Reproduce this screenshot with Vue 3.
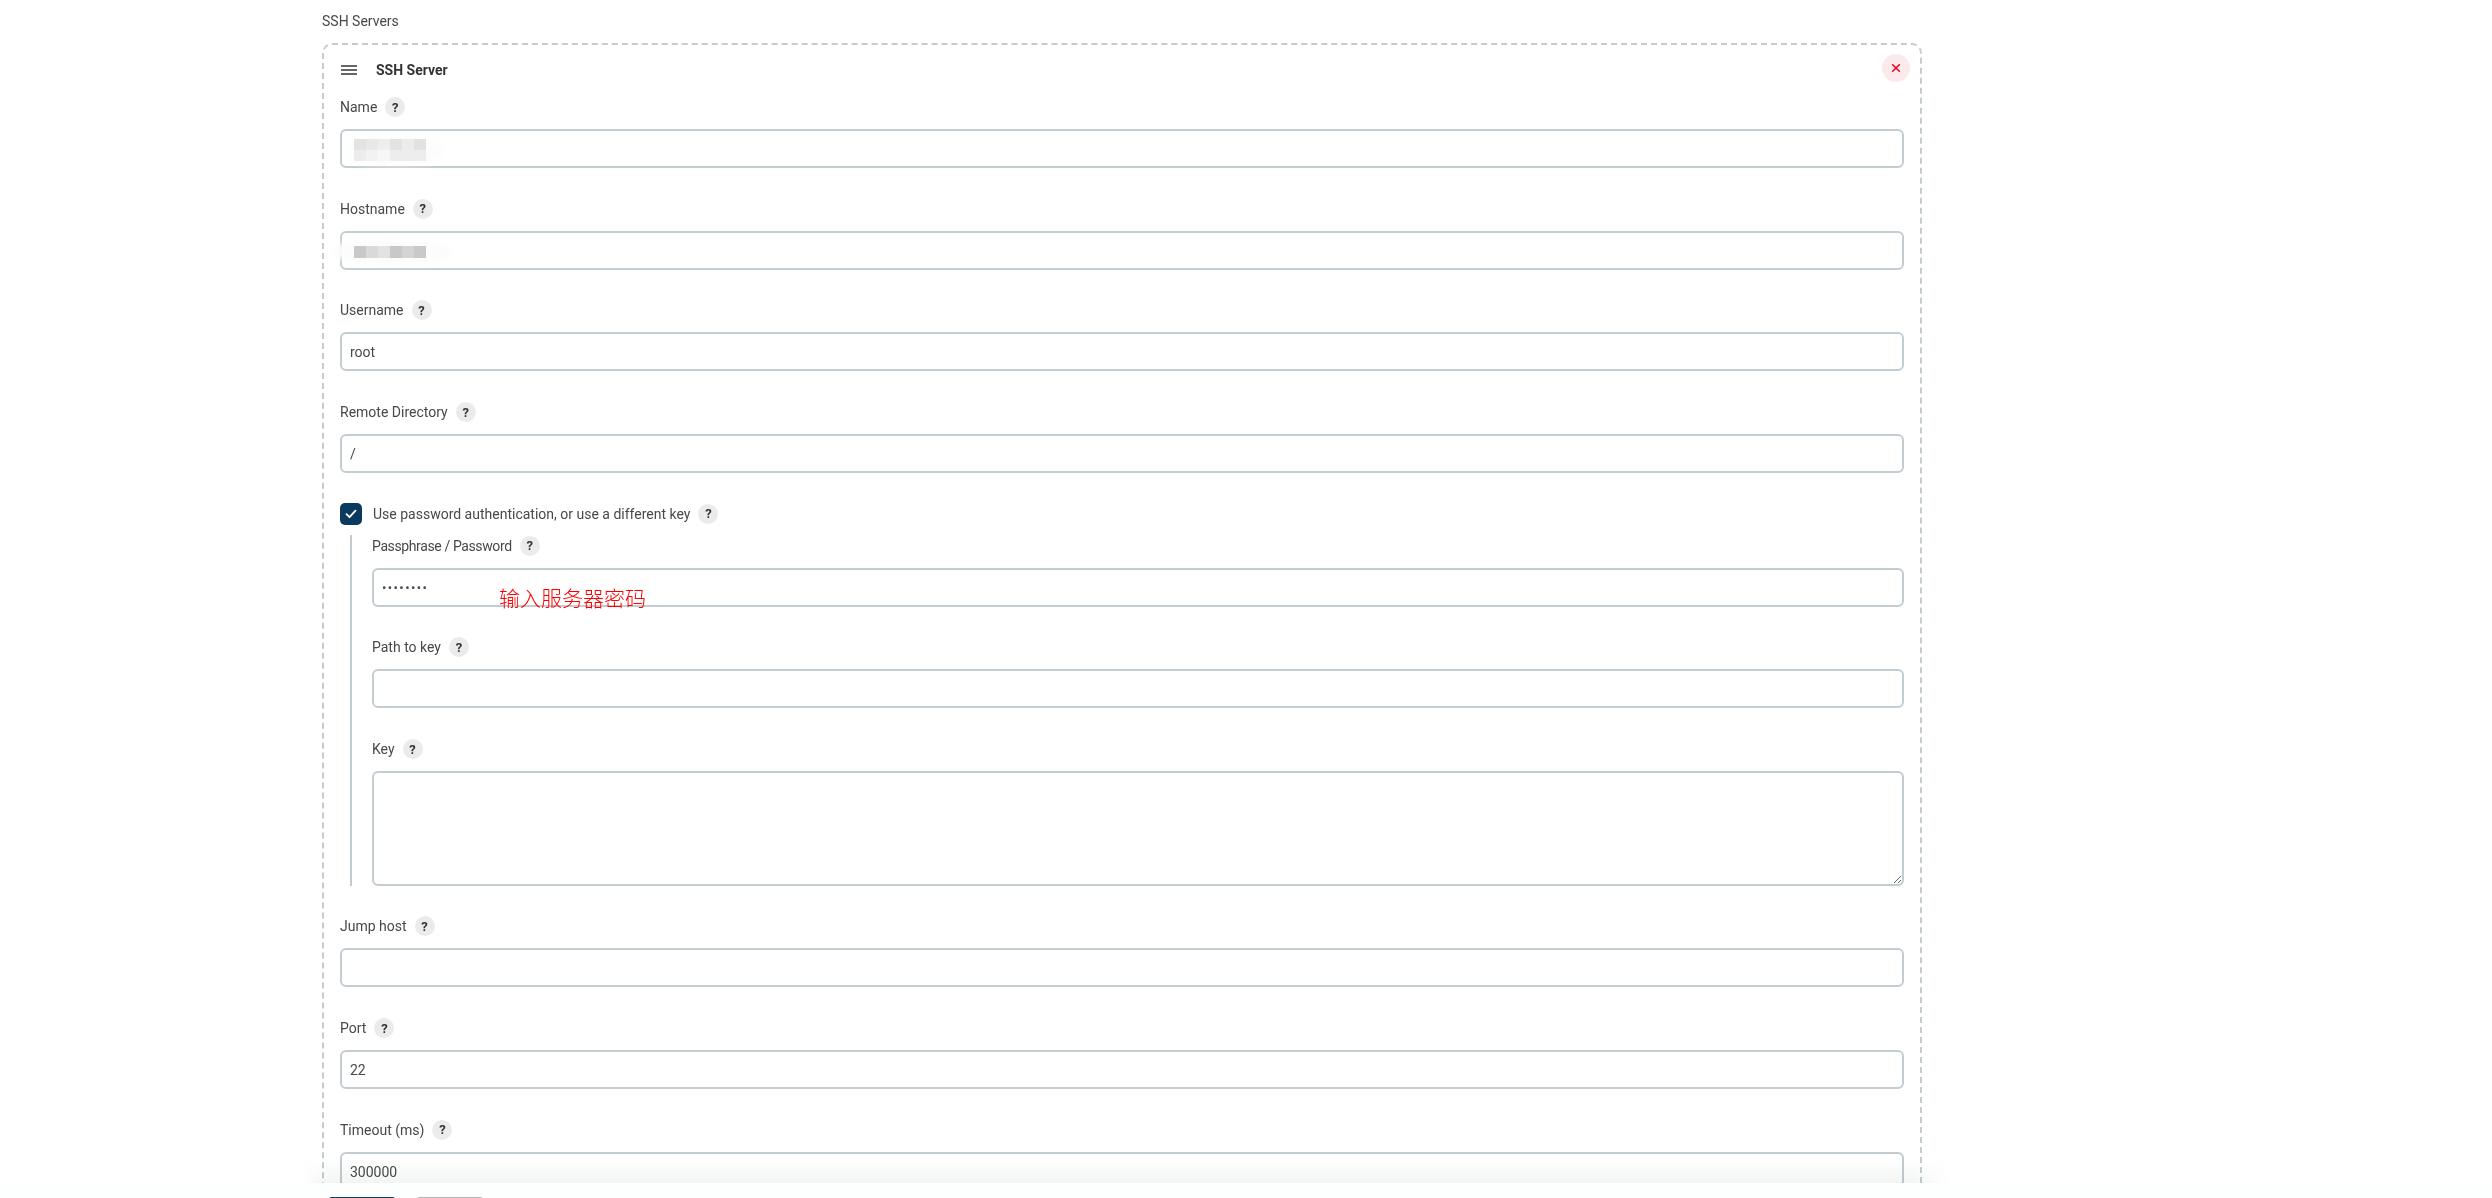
<template>
  <div class="page">
    <div class="section-title">SSH Servers</div>
    <div class="card">
      <div class="card-head">
        <svg class="drag" width="16" height="10" viewBox="0 0 16 10" aria-hidden="true">
          <path d="M0 1h16M0 5h16M0 9h16" stroke="#333" stroke-width="1.3" fill="none" />
        </svg>
        <span class="card-title">SSH Server</span>
        <button class="close" type="button" aria-label="Delete">
          <svg width="10" height="10" viewBox="0 0 10 10" aria-hidden="true">
            <path d="M1.2 1.2l7.6 7.6M8.8 1.2l-7.6 7.6" stroke="#e6001f" stroke-width="1.5" fill="none" />
          </svg>
        </button>
      </div>

      <div v-for="f in topFields" :key="f.label" class="field">
        <div class="label"><span>{{ f.label }}</span><i class="help">?</i></div>
        <div class="input-wrap">
          <input class="input" :value="f.value" readonly />
          <div v-if="f.blur" class="smudge" :class="'smudge--' + f.blur">
            <span
              v-for="(c, i) in blurCells[f.blur]"
              :key="i"
              class="cell"
              :style="{ background: c }"
            ></span>
          </div>
        </div>
      </div>

      <div class="check-row">
        <span class="checkbox">
          <svg width="12" height="10" viewBox="0 0 12 10" aria-hidden="true">
            <path d="M1.5 5.2l3 3 6-6.6" stroke="#fff" stroke-width="1.8" fill="none" stroke-linecap="round" stroke-linejoin="round" />
          </svg>
        </span>
        <span class="check-label">Use password authentication, or use a different key</span>
        <i class="help">?</i>
      </div>

      <div class="nested">
        <div class="field">
          <div class="label"><span class="tight">Passphrase / Password</span><i class="help">?</i></div>
          <div class="input-wrap">
            <input class="input input--pw" type="password" value="12345678" readonly />
            <span class="note">输入服务器密码</span>
          </div>
        </div>
        <div class="field">
          <div class="label"><span>Path to key</span><i class="help">?</i></div>
          <input class="input" readonly />
        </div>
        <div class="field field--last">
          <div class="label"><span>Key</span><i class="help">?</i></div>
          <textarea class="input textarea" readonly></textarea>
        </div>
      </div>

      <div v-for="f in bottomFields" :key="f.label" class="field">
        <div class="label"><span>{{ f.label }}</span><i class="help">?</i></div>
        <input class="input" :value="f.value" readonly />
      </div>
    </div>

    <div class="app-bar">
      <div class="bar-btn bar-btn--save"></div>
      <div class="bar-btn bar-btn--apply"></div>
    </div>
  </div>
</template>

<script setup>
const blurCells = {
  name: [
    "#e3e3e3", "#e8e8e8", "#eeeeee", "#e3e3e3", "#ececec", "#e2e2e2",
    "#ececec", "#f2f2f2", "#f7f7f7", "#ededed", "#ededed", "#ededed",
  ],
  host: ["#c9c9c9", "#d9d9d9", "#e2e2e2", "#c8c8c8", "#d4d4d4", "#c9c9c9"],
};

const topFields = [
  { label: "Name", value: "", blur: "name" },
  { label: "Hostname", value: "", blur: "host" },
  { label: "Username", value: "root" },
  { label: "Remote Directory", value: "/" },
];

const bottomFields = [
  { label: "Jump host", value: "" },
  { label: "Port", value: "22" },
  { label: "Timeout (ms)", value: "300000" },
];
</script>

<style>
html,
body {
  margin: 0;
  background: #fff;
  overflow: hidden;
}
</style>

<style scoped>
.page {
  position: relative;
  height: 1198px;
  overflow: hidden;
  box-sizing: border-box;
  padding: 11px 570px 0 322px;
  background: #fff;
  font-family: Roboto, "Noto Sans", "Noto Sans CJK SC", sans-serif;
  font-size: 14px;
  color: #484848;
}
.section-title {
  height: 21px;
  line-height: 21px;
  margin-bottom: 11px;
}
.card {
  border: 2px dashed #c3ccd1;
  border-radius: 10px;
  padding: 0 16px;
}
.card-head {
  position: relative;
  display: flex;
  align-items: center;
  height: 50px;
  margin-bottom: 2px;
}
.drag {
  margin-left: 1px;
  margin-right: 19px;
}
.card-title {
  font-weight: 700;
  font-size: 14px;
  color: #333;
}
.close {
  position: absolute;
  right: -6px;
  top: 9px;
  width: 28px;
  height: 28px;
  border: 0;
  padding: 0;
  border-radius: 50%;
  background: #fbeaec;
  display: flex;
  align-items: center;
  justify-content: center;
}
.field {
  margin-bottom: 30.7px;
}
.label {
  display: flex;
  align-items: center;
  gap: 8px;
  height: 20px;
  margin-bottom: 12px;
}
.tight {
  letter-spacing: -0.38px;
}
.help {
  display: inline-flex;
  align-items: center;
  justify-content: center;
  width: 20px;
  height: 20px;
  border-radius: 50%;
  background: #ebebeb;
  color: #333;
  font-style: normal;
  font-weight: 700;
  font-size: 13px;
}
.input-wrap {
  position: relative;
}
.input {
  display: block;
  width: 100%;
  height: 39px;
  box-sizing: border-box;
  border: 2px solid #c3ccd1;
  border-radius: 6px;
  padding: 1px 8px 0;
  background: #fff;
  font: inherit;
  color: #484848;
  outline: none;
}
.input--pw {
  font-size: 13px;
  letter-spacing: 1.4px;
}
.textarea {
  height: 115px;
  resize: vertical;
}
.smudge {
  position: absolute;
  z-index: 0;
  left: 14px;
  display: grid;
  grid-template-columns: repeat(6, 12px);
}
.smudge::before {
  content: "";
  position: absolute;
  z-index: -1;
  border-radius: 40%;
  background: #fcfcfc;
  filter: blur(3px);
}
.smudge--name {
  top: 10px;
  grid-auto-rows: 11px;
}
.smudge--name::before {
  left: -6px;
  right: -16px;
  top: 0;
  bottom: -3px;
}
.smudge--host {
  top: 15px;
  grid-auto-rows: 12px;
}
.smudge--host::before {
  left: -20px;
  right: -24px;
  top: -7px;
  bottom: -6px;
}
.cell {
  display: block;
}
.check-row {
  display: flex;
  align-items: center;
  height: 22px;
  margin-top: -1px;
}
.checkbox {
  display: flex;
  align-items: center;
  justify-content: center;
  width: 22px;
  height: 22px;
  border-radius: 5px;
  background: #0b3a5e;
  margin-right: 11px;
}
.check-label {
  margin-right: 8px;
}
.nested {
  margin: 10px 0 30.2px 10px;
  padding: 1px 0 0 20px;
  border-left: 2px solid #c3ccd1;
}
.field--last {
  margin-bottom: 0;
}
.note {
  position: absolute;
  left: 127px;
  top: 15px;
  color: #f00;
  font-size: 21px;
  line-height: 28px;
  font-family: "Noto Sans CJK SC", sans-serif;
  font-weight: 300;
  white-space: nowrap;
}
.app-bar {
  position: absolute;
  left: 0;
  right: 0;
  bottom: 0;
  height: 15px;
  background: #fdfefe;
}
.app-bar::before {
  content: "";
  position: absolute;
  left: 300px;
  width: 1650px;
  bottom: 100%;
  height: 24px;
  background:
    linear-gradient(90deg, #fff, rgba(255, 255, 255, 0) 30px, rgba(255, 255, 255, 0) 1610px, #fff),
    linear-gradient(#fff, #f3f4f4);
  mix-blend-mode: multiply;
}
.bar-btn {
  position: absolute;
  top: 14px;
  height: 10px;
  width: 70px;
  border-radius: 6px;
}
.bar-btn--save {
  left: 327px;
  background: #0b3a5e;
}
.bar-btn--apply {
  left: 415px;
  background: #b4b8bc;
}
</style>
